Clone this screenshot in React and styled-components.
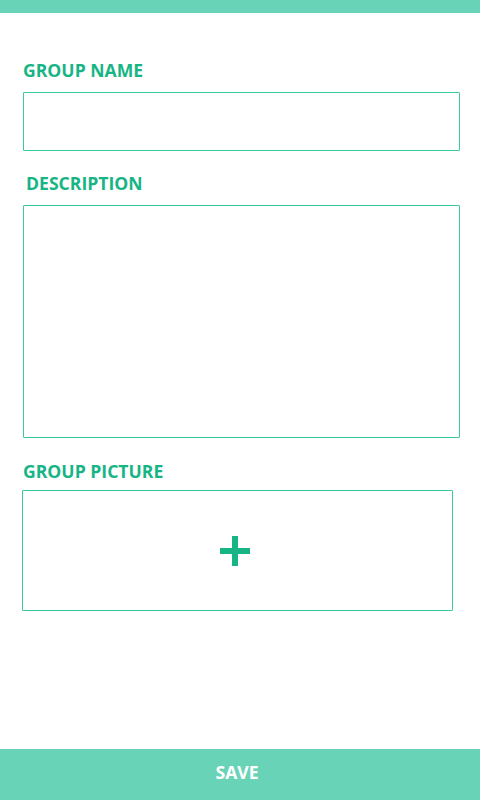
import React from "react";
import styled, { createGlobalStyle } from "styled-components";

const Global = createGlobalStyle`
  html, body { margin: 0; padding: 0; background: #ffffff; }
  body { font-family: "Open Sans", "Noto Sans", sans-serif; }
  * { box-sizing: border-box; }
`;

const Page = styled.div`
  display: flex;
  flex-direction: column;
  height: 800px;
  width: 480px;
  background: #fff;
`;

const TopBar = styled.div`
  height: 13px;
  background: #68d3b6;
  flex-shrink: 0;
`;

const Form = styled.div`
  flex: 1;
  display: flex;
  flex-direction: column;
  padding: 47px 20px 0 23px;
`;

const Label = styled.div`
  font-size: 17.6px;
  font-weight: 700;
  line-height: 20px;
  height: 20px;
  color: #17b485;
  padding-left: ${(p) => p.$indent || 0}px;
  margin-top: ${(p) => p.$top || 0}px;
`;

const Box = styled.div`
  border: 1px solid #38c99c;
  border-radius: 1px;
  background: #fff;
  width: ${(p) => p.$w}px;
  height: ${(p) => p.$h}px;
  margin-top: ${(p) => p.$top}px;
  margin-left: ${(p) => p.$left || 0}px;
`;

const PictureBox = styled(Box)`
  display: flex;
  align-items: center;
  justify-content: center;
  cursor: pointer;
`;

const Plus = styled.div`
  position: relative;
  width: 30px;
  height: 30px;
  margin-left: -6px;
  &::before, &::after {
    content: "";
    position: absolute;
    background: #17b485;
  }
  &::before { left: 0; top: 12px; width: 30px; height: 6px; }
  &::after { left: 12px; top: 0; width: 6px; height: 30px; }
`;

const SaveBar = styled.div`
  height: 51px;
  flex-shrink: 0;
  background: #68d3b6;
  display: flex;
  align-items: center;
  justify-content: center;
  color: #ffffff;
  font-size: 17.6px;
  font-weight: 700;
  padding-right: 6px;
  padding-bottom: 6px;
`;

export default function App() {
  return (
    <>
      <Global />
      <Page>
        <TopBar />
        <Form>
          <Label>GROUP NAME</Label>
          <Box $w={437} $h={59} $top={12} />
          <Label $indent={3} $top={22}>DESCRIPTION</Label>
          <Box $w={437} $h={233} $top={12} />
          <Label $top={23}>GROUP PICTURE</Label>
          <PictureBox $w={431} $h={121} $top={9} $left={-1}>
            <Plus />
          </PictureBox>
        </Form>
        <SaveBar>SAVE</SaveBar>
      </Page>
    </>
  );
}
